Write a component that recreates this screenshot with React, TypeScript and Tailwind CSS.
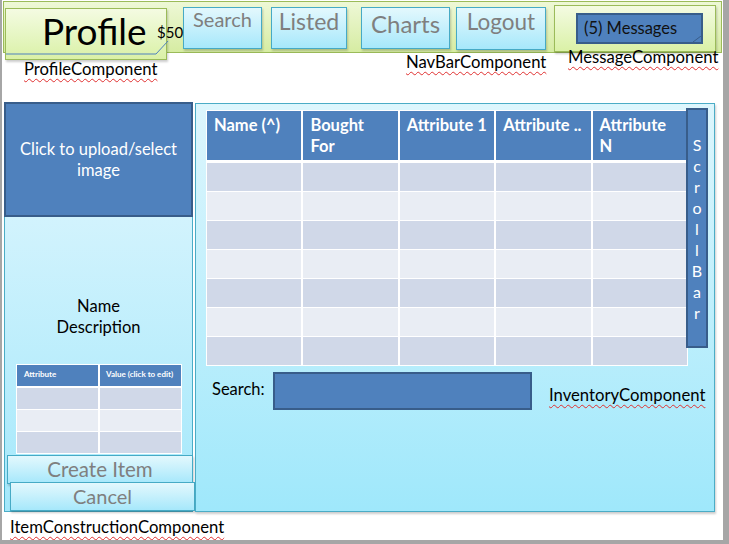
import React from "react";

const navBtn =
  "border border-[#46aac5] bg-gradient-to-b from-[#e3f8fd] to-[#a6e8fb] text-[#7f7f7f] shadow-[1px_2px_2px_rgba(0,0,0,0.2)] flex justify-center leading-none";

const label = "text-[16.7px] leading-[19px] text-black underline decoration-wavy decoration-[#e03030] decoration-1 underline-offset-[3px] whitespace-nowrap";

const headers = ["Name (^)", "Bought\nFor", "Attribute 1", "Attribute ..", "Attribute\nN"];
const scrollLetters = ["S", "c", "r", "o", "l", "l", "B", "a", "r"];

export default function App() {
  return (
    <div className="w-[729px] h-[544px] overflow-hidden bg-white border-l-2 border-r-[6px] border-b-4 border-[#a6a6a6] font-['Lato','Open_Sans',sans-serif]">
      {/* nav bar */}
      <div className="ml-px mt-px w-[719px] h-[52px] border border-[#9bbb59] bg-gradient-to-b from-[#eef8d6] to-[#d6eca2] flex items-start">
        <div className="relative ml-px mt-[6px] w-[162px] h-[52px] shrink-0 border border-[#9bbb59] bg-gradient-to-b from-[#f4fbe2] to-[#daf1a6] shadow-[1px_2px_2px_rgba(0,0,0,0.2)]">
          <div className="pl-[36px] pt-[2px] text-[37px] leading-[40px] text-black">Profile</div>
          <svg className="absolute left-0 top-0 overflow-visible" width="162" height="52">
            <polyline points="0,45 150,45 162,32" fill="none" stroke="#4f81bd" strokeWidth="1" />
          </svg>
          <span className="absolute left-[151px] top-[14px] text-[15px] leading-[18px] text-black">$50</span>
        </div>
        <div className={`${navBtn} ml-[16px] mt-[5px] w-[79px] h-[42px] pt-[1px] text-[20px]`}>Search</div>
        <div className={`${navBtn} ml-[9px] mt-[5px] w-[76px] h-[42px] pt-[2px] text-[23px]`}>Listed</div>
        <div className={`${navBtn} ml-[14px] mt-[5px] w-[89px] h-[42px] pt-[4px] text-[24px]`}>Charts</div>
        <div className={`${navBtn} ml-[6px] mt-[5px] w-[90px] h-[43px] pt-[3px] text-[22.5px]`}>Logout</div>
        <div className="ml-[8px] mt-[3px] w-[162px] h-[47px] shrink-0 border border-[#9bbb59] bg-gradient-to-b from-[#f4fbe2] to-[#daf1a6] shadow-[1px_2px_2px_rgba(0,0,0,0.2)] pl-[21px] pt-[7px]">
          <div className="relative w-[127px] h-[31px] bg-[#4f81bd] border-2 border-[#385d8a] pl-[6px] text-[16.5px] leading-[26px] text-[#111] whitespace-nowrap">
            (5) Messages
            <svg className="absolute right-0 bottom-0" width="8" height="6">
              <line x1="0" y1="6" x2="8" y2="0" stroke="#385d8a" strokeWidth="1" />
            </svg>
          </div>
        </div>
      </div>

      {/* component labels */}
      <div className="flex items-start h-[49px]">
        <div className={`${label} ml-[22px] mt-[7px] w-[140px]`}>ProfileComponent</div>
        <div className={`${label} ml-[242px] mt-0 w-[150px]`}>NavBarComponent</div>
        <div className={`${label} ml-[12px] -mt-[5px]`}>MessageComponent</div>
      </div>

      {/* main */}
      <div className="flex items-start h-[412px]">
        {/* item construction */}
        <div className="ml-[2px] w-[189px] flex flex-col shrink-0">
          <div className="h-[115px] bg-[#4f81bd] border-2 border-[#385d8a] flex items-center justify-center text-center text-white text-[16.5px] leading-[21px]">
            Click to upload/select
            <br />
            image
          </div>
          <div className="h-[295px] border-x border-b border-[#4bacc6] bg-gradient-to-b from-[#d2f3fd] to-[#a3e8fb] flex flex-col">
            <div className="pt-[79px] text-center text-[16.5px] leading-[21px] text-black">
              Name
              <br />
              Description
            </div>
            <div className="ml-[11px] mt-[26px] w-[166px] bg-white p-px">
              <div className="grid grid-cols-2 gap-x-[2px] bg-white">
                <div className="h-[21px] bg-[#4f81bd] text-white font-bold text-[8px] pl-[7px] pt-[5px] leading-none">Attribute</div>
                <div className="h-[21px] bg-[#4f81bd] text-white font-bold text-[8px] pl-[6px] pt-[5px] leading-none whitespace-nowrap">Value (click to edit)</div>
              </div>
              <div className="mt-[2px] grid grid-cols-2 gap-x-[2px] gap-y-px">
                {[0, 1, 2].map((r) =>
                  [0, 1].map((c) => (
                    <div key={`${r}-${c}`} className={`h-[21px] ${r % 2 === 0 ? "bg-[#d0d8e8]" : "bg-[#e9edf4]"}`} />
                  ))
                )}
              </div>
            </div>
            <div className={`${navBtn} ml-[2px] mt-[1px] w-[186px] h-[29px] shrink-0 pt-[3px] text-[20.5px]`}>Create Item</div>
            <div className={`${navBtn} ml-[5px] -mt-[2px] w-[185px] h-[29px] shrink-0 pt-[3px] text-[20px]`}>Cancel</div>
          </div>
        </div>

        {/* inventory */}
        <div className="relative ml-[2px] mt-px w-[520px] h-[409px] border border-[#4bacc6] bg-gradient-to-b from-[#ddf6fd] to-[#9fe8fb] shadow-[1px_2px_2px_rgba(0,0,0,0.2)]">
          <div className="ml-[10px] mt-[6px] w-[482px] bg-white p-px">
            <div className="grid grid-cols-5 gap-x-[2px]">
              {headers.map((h) => (
                <div key={h} className="h-[49px] bg-[#4f81bd] text-white font-bold text-[16.5px] leading-[21px] pl-[7px] pt-[4px] whitespace-pre-line">
                  {h}
                </div>
              ))}
            </div>
            <div className="mt-[3px] grid grid-cols-5 gap-x-[2px] gap-y-px">
              {[0, 1, 2, 3, 4, 5, 6].map((r) =>
                [0, 1, 2, 3, 4].map((c) => (
                  <div key={`${r}-${c}`} className={`h-[28px] ${r % 2 === 0 ? "bg-[#d0d8e8]" : "bg-[#e9edf4]"}`} />
                ))
              )}
            </div>
          </div>
          <div className="absolute left-[490px] top-[4px] w-[22px] h-[240px] bg-[#4f81bd] border-2 border-[#385d8a] flex flex-col items-center justify-center text-white text-[16px] leading-[21px]">
            {scrollLetters.map((l, i) => (
              <span key={i}>{l}</span>
            ))}
          </div>
          <div className="flex items-start mt-[6px]">
            <div className="ml-[16px] mt-[7px] w-[61px] text-[16.5px] leading-[20px] text-black">Search:</div>
            <div className="w-[259px] h-[38px] bg-[#4f81bd] border-2 border-[#385d8a]" />
            <div className={`${label} ml-[17px] mt-[14px]`}>InventoryComponent</div>
          </div>
        </div>
      </div>

      <div className={`${label} ml-[8px] mt-[4px]`}>ItemConstructionComponent</div>
    </div>
  );
}
